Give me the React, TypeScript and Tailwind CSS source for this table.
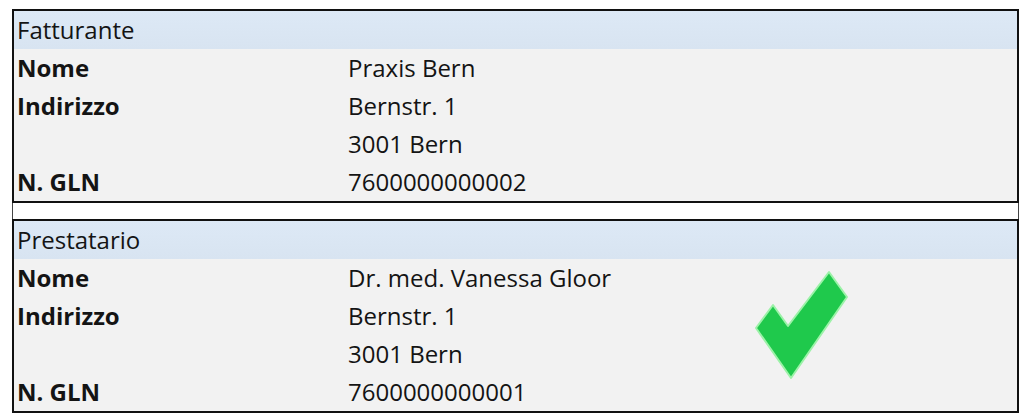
import React from 'react';

type Row = { label: string; value: string };

const fatturante: Row[] = [
  { label: 'Nome', value: 'Praxis Bern' },
  { label: 'Indirizzo', value: 'Bernstr. 1' },
  { label: '', value: '3001 Bern' },
  { label: 'N. GLN', value: '7600000000002' },
];

const prestatario: Row[] = [
  { label: 'Nome', value: 'Dr. med. Vanessa Gloor' },
  { label: 'Indirizzo', value: 'Bernstr. 1' },
  { label: '', value: '3001 Bern' },
  { label: 'N. GLN', value: '7600000000001' },
];

function CheckMark() {
  return (
    <svg
      className="absolute left-[734px] top-[44px]"
      width="106"
      height="118"
      viewBox="748 265 106 118"
    >
      <polygon
        points="756,328 773,305 788,326 829,272 847,297 791,378"
        fill="#1fc94c"
        stroke="#9cf2a8"
        strokeWidth="2"
        strokeLinejoin="round"
      />
    </svg>
  );
}

function Section({ title, rows, children }: { title: string; rows: Row[]; children?: React.ReactNode }) {
  return (
    <div className="relative border-2 border-[#111]">
      <div className="h-[38px] flex items-center pl-[3px] bg-gradient-to-b from-[#dde9f6] to-[#d8e4f1]">
        <span>{title}</span>
      </div>
      <div className="bg-[#f2f2f2]">
        {rows.map((r, i) => (
          <div key={i} className="h-[38px] flex items-center">
            <div className="w-[334px] pl-[3px] font-bold">{r.label}</div>
            <div>{r.value}</div>
          </div>
        ))}
      </div>
      {children}
    </div>
  );
}

export default function App() {
  return (
    <div
      className="w-[1024px] h-[420px] bg-white text-[#141414] text-[24px] leading-none overflow-hidden"
      style={{ fontFamily: '"Open Sans", sans-serif' }}
    >
      <div className="pt-[9px] pl-[12px] w-[1019px]">
        <Section title="Fatturante" rows={fatturante} />
        <div className="h-[16px] border-x border-[#444] bg-white" />
        <Section title="Prestatario" rows={prestatario}>
          <CheckMark />
        </Section>
      </div>
    </div>
  );
}
